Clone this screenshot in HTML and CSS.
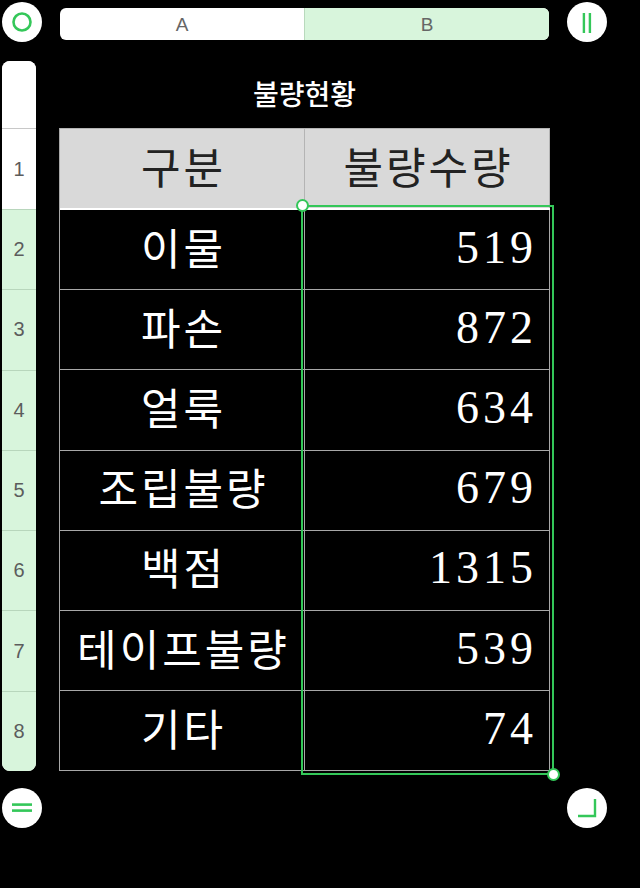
FILE: index.html
```html
<!DOCTYPE html>
<html lang="ko">
<head>
<meta charset="utf-8">
<title>불량현황</title>
<link rel="stylesheet" href="styles.css">
</head>
<body>
<div class="page">
  <div class="topbar">
    <div class="btn">
      <svg width="40" height="40" viewBox="0 0 40 40"><circle cx="20" cy="20" r="8.5" fill="none" stroke="#34c759" stroke-width="2.6"/></svg>
    </div>
    <div class="colheads">
      <div class="colhead">A</div>
      <div class="colhead sel">B</div>
    </div>
    <div class="btn">
      <svg width="40" height="40" viewBox="0 0 40 40"><rect x="15.7" y="11" width="2.4" height="20" fill="#34c759"/><rect x="21.7" y="11" width="2.4" height="20" fill="#34c759"/></svg>
    </div>
  </div>

  <div class="sheet">
    <div class="rowheads">
      <div class="rh-top"></div>
      <div class="rh first">1</div>
      <div class="rh on">2</div>
      <div class="rh on">3</div>
      <div class="rh on">4</div>
      <div class="rh on">5</div>
      <div class="rh on">6</div>
      <div class="rh on">7</div>
      <div class="rh on">8</div>
    </div>
    <div class="tablecol">
      <div class="title">불량현황</div>
      <div class="grid">
        <div class="row head">
          <div class="cell a">구분</div>
          <div class="cell b ctr">불량수량</div>
        </div>
        <div class="row"><div class="cell a">이물</div><div class="cell b num">519</div></div>
        <div class="row"><div class="cell a">파손</div><div class="cell b num">872</div></div>
        <div class="row"><div class="cell a">얼룩</div><div class="cell b num">634</div></div>
        <div class="row"><div class="cell a">조립불량</div><div class="cell b num">679</div></div>
        <div class="row"><div class="cell a">백점</div><div class="cell b num">1315</div></div>
        <div class="row"><div class="cell a">테이프불량</div><div class="cell b num">539</div></div>
        <div class="row"><div class="cell a">기타</div><div class="cell b num">74</div></div>
      </div>
    </div>
  </div>

  <div class="bottombar">
    <div class="btn">
      <svg width="40" height="40" viewBox="0 0 40 40"><rect x="10" y="15.3" width="20" height="2.6" fill="#34c759"/><rect x="10" y="21.3" width="20" height="2.6" fill="#34c759"/></svg>
    </div>
    <div class="btn">
      <svg width="40" height="40" viewBox="0 0 40 40"><path d="M28 11 V28 H11" fill="none" stroke="#34c759" stroke-width="2.4"/></svg>
    </div>
  </div>

  <div class="selection">
    <span class="handle tl"></span>
    <span class="handle br"></span>
  </div>
</div>
</body>
</html>
```

FILE: styles.css
```css
* { box-sizing: border-box; }
html, body { margin: 0; padding: 0; background: #000; }
body {
  width: 640px;
  height: 888px;
  overflow: hidden;
  font-family: "Liberation Sans", "Noto Sans CJK KR", sans-serif;
}
.page { position: relative; width: 640px; height: 888px; }

.topbar {
  display: flex;
  align-items: flex-start;
  gap: 18px;
  padding: 2px 0 0 2px;
  height: 61px;
}
.btn {
  width: 40px;
  height: 40px;
  border-radius: 50%;
  background: #fff;
  flex: none;
}
.btn svg { display: block; }
.colheads {
  display: flex;
  width: 489px;
  height: 32px;
  margin-top: 6px;
  border-radius: 6px;
  overflow: hidden;
  background: #fff;
}
.colhead {
  flex: 1;
  display: flex;
  align-items: center;
  justify-content: center;
  font-size: 19px;
  color: #666;
  padding-top: 2px;
}
.colhead.sel {
  background: #d8f5dc;
  border-left: 1px solid #b9d9bd;
}

.sheet {
  display: flex;
  gap: 23px;
  padding-left: 2px;
}
.rowheads {
  width: 34px;
  border-radius: 8px;
  overflow: hidden;
  background: #fff;
}
.rh-top { height: 67px; background: #fff; }
.rh {
  height: 80.3px;
  border-top: 1px solid #c8c8c8;
  display: flex;
  align-items: center;
  justify-content: center;
  font-size: 20px;
  color: #5c5c5c;
}
.rh.first { height: 81px; background: #fff; }
.rh.on { background: #d8f5dc; border-top-color: #b8d6bc; }

.tablecol { width: 491px; }
.title {
  height: 67px;
  display: flex;
  align-items: center;
  justify-content: center;
  color: #fff;
  font-family: "Noto Sans CJK KR", sans-serif;
  font-weight: 500;
  font-size: 28px;
  padding-bottom: 3px;
}
.grid {
  border-left: 1px solid #a8a8a8;
}
.row {
  display: flex;
  height: 80.2px;
  border-bottom: 1px solid #a8a8a8;
}
.row.head {
  height: 82px;
  background: #d9d9d9;
  border-top: 1px solid #b4b4b4;
  border-bottom: 2px solid #fff;
}
.cell {
  display: flex;
  align-items: center;
  border-right: 1px solid #a8a8a8;
  color: #fff;
  font-family: "Noto Sans CJK KR", sans-serif;
  font-size: 43px;
  letter-spacing: 3px;
  padding-bottom: 8px;
}
.cell.a { width: 245px; justify-content: center; padding-left: 3px; }
.cell.b { width: 245px; }
.row.head .cell { color: #222; border-right-color: #b4b4b4; }
.cell.ctr { justify-content: center; padding-left: 3px; }
.cell.num {
  justify-content: flex-end;
  padding-right: 12px;
  padding-bottom: 5px;
  font-family: "Liberation Serif", serif;
  font-size: 46px;
  letter-spacing: 4px;
}

.bottombar {
  display: flex;
  justify-content: space-between;
  width: 607px;
  padding-left: 2px;
  margin-top: 17px;
}

.selection {
  position: absolute;
  left: 301px;
  top: 204.5px;
  width: 253px;
  height: 570.5px;
  border: 2px solid #34c759;
}
.handle {
  position: absolute;
  width: 13px;
  height: 13px;
  border-radius: 50%;
  background: #fff;
  border: 2px solid #34c759;
}
.handle.tl { left: -7.5px; top: -7.5px; }
.handle.br { right: -8px; bottom: -7.5px; }
```
